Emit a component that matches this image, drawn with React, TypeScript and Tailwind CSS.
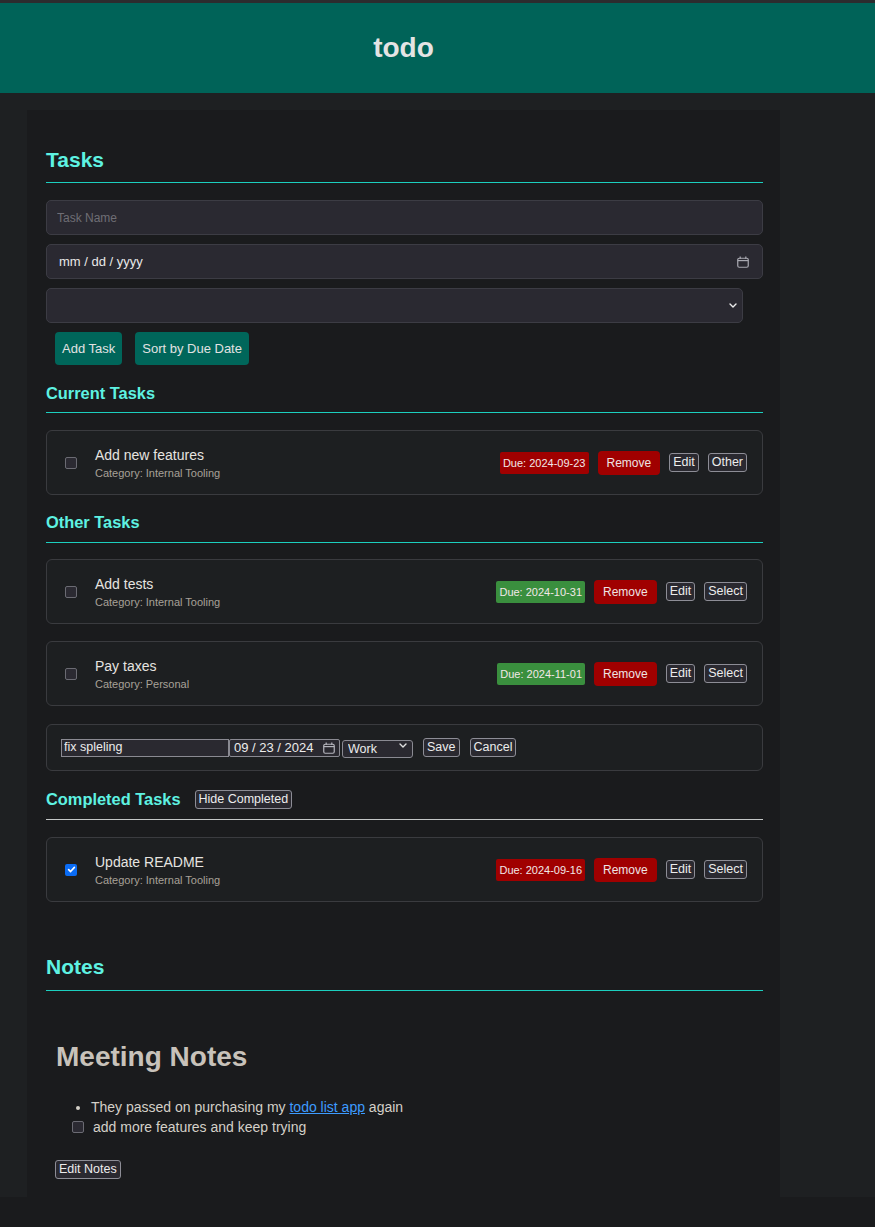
import React from 'react';

type Task = {
  name: string;
  category: string;
  due: string;
  overdue: boolean;
  done?: boolean;
  action: string;
};

const currentTasks: Task[] = [
  { name: 'Add new features', category: 'Internal Tooling', due: '2024-09-23', overdue: true, action: 'Other' },
];

const otherTasks: Task[] = [
  { name: 'Add tests', category: 'Internal Tooling', due: '2024-10-31', overdue: false, action: 'Select' },
  { name: 'Pay taxes', category: 'Personal', due: '2024-11-01', overdue: false, action: 'Select' },
];

const completedTasks: Task[] = [
  { name: 'Update README', category: 'Internal Tooling', due: '2024-09-16', overdue: true, done: true, action: 'Select' },
];

const CalendarIcon = ({ className = '' }: { className?: string }) => (
  <svg viewBox="0 0 12 12" width="12" height="12" className={className} fill="none">
    <rect x="0.75" y="2.25" width="10.5" height="9" rx="1.5" stroke="currentColor" strokeWidth="1.2" />
    <line x1="0.75" y1="4.6" x2="11.25" y2="4.6" stroke="currentColor" strokeWidth="1.2" />
    <rect x="2.6" y="0.5" width="1.2" height="2.4" fill="currentColor" />
    <rect x="8.2" y="0.5" width="1.2" height="2.4" fill="currentColor" />
  </svg>
);

const Chevron = ({ className = '' }: { className?: string }) => (
  <svg viewBox="0 0 8 5" width="8" height="5" className={className} fill="none">
    <polyline points="1,1 4,4 7,1" stroke="currentColor" strokeWidth="1.4" strokeLinecap="round" strokeLinejoin="round" />
  </svg>
);

const Checkbox = ({ checked = false }: { checked?: boolean }) =>
  checked ? (
    <span className="flex h-[12px] w-[12px] shrink-0 items-center justify-center rounded-[2px] bg-[#0a6cf5]">
      <svg viewBox="0 0 10 10" width="9" height="9" fill="none">
        <polyline points="1.8,5.2 4,7.3 8.2,2.6" stroke="#fff" strokeWidth="1.8" strokeLinecap="round" strokeLinejoin="round" />
      </svg>
    </span>
  ) : (
    <span className="block h-[12px] w-[12px] shrink-0 rounded-[2px] border border-[#6b6b73] bg-[#2b2a32]" />
  );

const SmallButton = ({ children }: { children: React.ReactNode }) => (
  <button className="rounded-[3px] border border-[#8d8d96] bg-[#2a2930] px-[3px] py-[1px] text-[12.5px] leading-[15px] text-[#ececec]">
    {children}
  </button>
);

// heading + 1px rule under it
const SectionTitle = ({
  children,
  line = 'cyan',
  pad = 'pb-[9px]',
  gap = 'mb-[17px]',
}: {
  children: React.ReactNode;
  line?: 'cyan' | 'gray';
  pad?: string;
  gap?: string;
}) => (
  <div className={gap}>
    <div className={pad}>{children}</div>
    <div className={line === 'cyan' ? 'h-px bg-[#1ccfbf]' : 'h-px bg-[#c3c6c6]'} />
  </div>
);

const TaskRow = ({ task }: { task: Task }) => (
  <div className="mb-[17px] flex h-[65px] items-center rounded-[6px] border border-[#3a3b3f] bg-[#1d1f21] pl-[18px] pr-[15px]">
    <Checkbox checked={task.done} />
    <div className="ml-[18px] flex-1">
      <div className="text-[14px] leading-[18px] text-[#e6e4e0]">{task.name}</div>
      <div className="mt-[2px] text-[11px] leading-[14px] text-[#a8a198]">Category: {task.category}</div>
    </div>
    <div className="flex items-center gap-[9px]">
      <span
        className={`rounded-[2px] px-[3px] text-[11px] leading-[22px] text-[#f2e8e8] ${
          task.overdue ? 'bg-[#a00000]' : 'bg-[#3a8f3e]'
        }`}
      >
        Due: {task.due}
      </span>
      <button className="h-[24px] rounded-[4px] bg-[#a00000] px-[9px] text-[12px] text-[#eee4e4]">Remove</button>
      <SmallButton>Edit</SmallButton>
      <SmallButton>{task.action}</SmallButton>
    </div>
  </div>
);

const EditRow = () => (
  <div className="mb-[18px] mt-[18px] flex h-[47px] items-center rounded-[6px] border border-[#3a3b3f] bg-[#1d1f21] pl-[14px]">
    <input
      defaultValue="fix spleling"
      className="h-[18px] w-[168px] border border-[#8a8a92] bg-[#2a2930] px-[2px] text-[12.5px] text-[#ececec] outline-none"
    />
    <div className="flex h-[18px] w-[111px] items-center justify-between rounded-[2px] border border-[#8a8a92] bg-[#2a2930] pl-[4px] pr-[4px]">
      <span className="text-[13px] leading-[16px] tabular-nums text-[#ececec]">09 / 23 / 2024</span>
      <CalendarIcon className="text-[#b5b5bd]" />
    </div>
    <div className="relative ml-[2px]">
      <select
        defaultValue="Work"
        className="h-[18px] w-[71px] appearance-none rounded-[3px] border border-[#8a8a92] bg-[#2a2930] pl-[5px] text-[12.5px] leading-[16px] text-[#ececec] outline-none"
      >
        <option>Work</option>
        <option>Personal</option>
        <option>Internal Tooling</option>
      </select>
      <Chevron className="pointer-events-none absolute right-[6px] top-[7px] text-[#e0e0e0]" />
    </div>
    <div className="ml-[10px] flex gap-[10px]">
      <SmallButton>Save</SmallButton>
      <SmallButton>Cancel</SmallButton>
    </div>
  </div>
);

export default function App() {
  return (
    <div className="min-h-screen bg-[#1a1b1d] font-['Liberation_Sans',Arial,sans-serif]">
      <div className="h-[3px] bg-[#2c2c2e]" />
      <div className="h-[1194px] bg-[#1e2022]">
        <header className="flex h-[90px] items-center bg-[#006358]">
          <h1 className="ml-[27px] w-[753px] text-center text-[28px] font-bold leading-[32px] text-[#e4e4e4]">todo</h1>
        </header>
        <div className="pl-[27px] pt-[17px]">
          <main className="w-[753px] bg-[#1a1b1d] pb-[50px] pl-[19px] pr-[17px] pt-[38px]">
            <div className="mb-[17px]">
              <h2 className="pb-[10px] text-[21px] font-bold leading-[24px] text-[#5ef2e2]">Tasks</h2>
              <div className="h-px bg-[#1ccfbf]" />
            </div>

            <input
              placeholder="Task Name"
              className="mb-[9px] block h-[35px] w-full rounded-[5px] border border-[#3c3c44] bg-[#2a2931] px-[10px] text-[12px] text-[#e8e8e8] outline-none placeholder:text-[#6f6e75]"
            />
            <div className="mb-[9px] flex h-[35px] w-full items-center justify-between rounded-[5px] border border-[#3c3c44] bg-[#2a2931] pl-[12px] pr-[13px]">
              <span className="text-[13px] text-[#e8e8e8]">mm / dd / yyyy</span>
              <CalendarIcon className="text-[#a9a9b1]" />
            </div>
            <div className="relative mb-[9px] w-[697px]">
              <select className="block h-[35px] w-full appearance-none rounded-[5px] border border-[#3c3c44] bg-[#2a2931] px-[10px] text-[13px] text-[#e8e8e8] outline-none">
                <option></option>
              </select>
              <Chevron className="pointer-events-none absolute right-[6px] top-[15px] text-[#ececec]" />
            </div>

            <div className="mb-[18px] ml-[9px] flex gap-[13px]">
              <button className="h-[33px] rounded-[4px] bg-[#00665a] px-[7px] text-[13px] text-[#e2e2e2]">Add Task</button>
              <button className="h-[33px] rounded-[4px] bg-[#00665a] px-[7px] text-[13px] text-[#e2e2e2]">Sort by Due Date</button>
            </div>

            <SectionTitle>
              <h3 className="text-[16.4px] font-bold leading-[20px] text-[#5ef2e2]">Current Tasks</h3>
            </SectionTitle>
            {currentTasks.map((t) => (
              <TaskRow key={t.name} task={t} />
            ))}

            <SectionTitle pad="pb-[10px]" gap="mb-[16px]">
              <h3 className="text-[16.4px] font-bold leading-[20px] text-[#5ef2e2]">Other Tasks</h3>
            </SectionTitle>
            {otherTasks.map((t) => (
              <TaskRow key={t.name} task={t} />
            ))}
            <EditRow />

            <SectionTitle line="gray" pad="pb-[10px]">
              <div className="flex items-center gap-[14px]">
                <h3 className="text-[16.4px] font-bold leading-[20px] text-[#5ef2e2]">Completed Tasks</h3>
                <SmallButton>Hide Completed</SmallButton>
              </div>
            </SectionTitle>
            {completedTasks.map((t) => (
              <TaskRow key={t.name} task={t} />
            ))}

            <div className="mt-[53px]">
              <h2 className="pb-[11px] text-[21px] font-bold leading-[24px] text-[#5ef2e2]">Notes</h2>
              <div className="h-px bg-[#1ccfbf]" />
            </div>

            <div className="pl-[10px]">
              <h1 className="mt-[50px] text-[28px] font-bold leading-[32px] text-[#c8c2ba]">Meeting Notes</h1>
              <ul className="mt-[24px] list-disc pl-[35px] text-[14px] leading-[20px] text-[#d4d0c8]">
                <li>
                  They passed on purchasing my{' '}
                  <a href="#" className="text-[#3d9bff] underline">
                    todo list app
                  </a>{' '}
                  again
                </li>
              </ul>
              <div className="flex items-center pl-[16px] text-[14px] leading-[20px] text-[#d4d0c8]">
                <Checkbox />
                <span className="ml-[9px]">add more features and keep trying</span>
              </div>
            </div>
            <div className="ml-[9px] mt-[19px]">
              <SmallButton>Edit Notes</SmallButton>
            </div>
          </main>
        </div>
      </div>
    </div>
  );
}
